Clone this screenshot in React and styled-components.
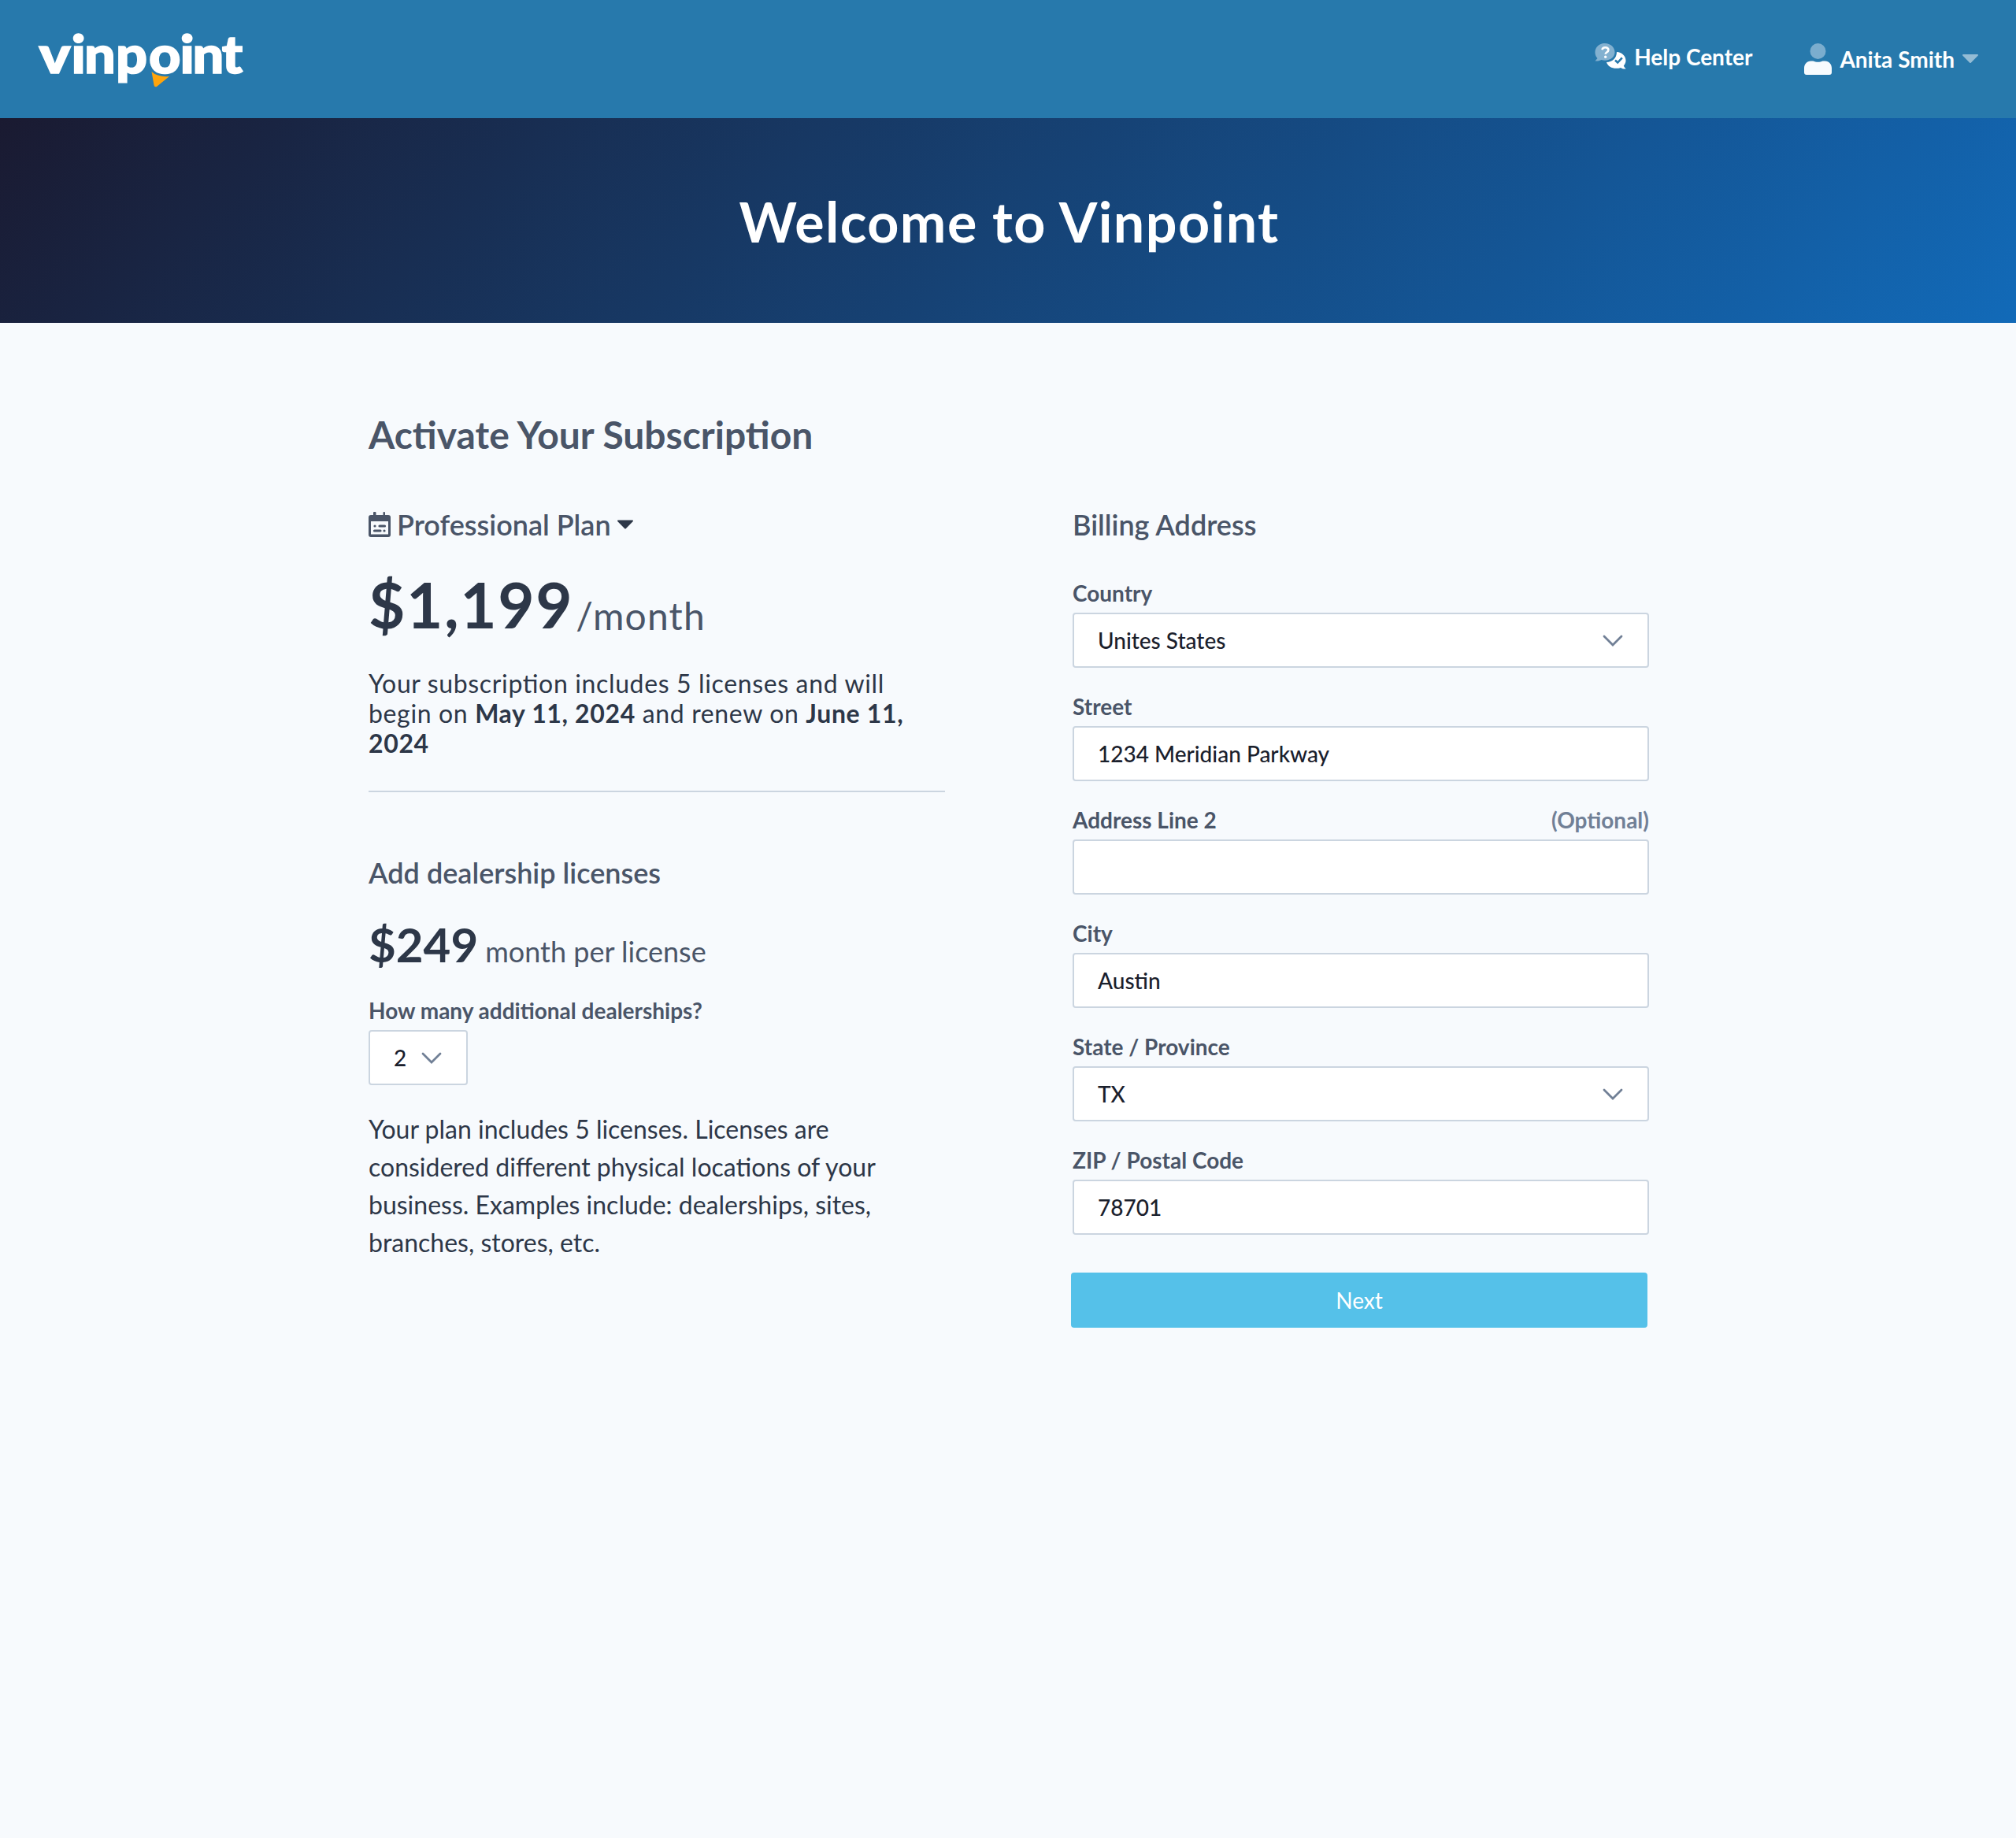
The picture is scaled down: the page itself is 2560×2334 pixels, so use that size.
import React from "react";
import styled, { createGlobalStyle } from "styled-components";

const GlobalStyle = createGlobalStyle`
  * { box-sizing: border-box; }
  body {
    margin: 0;
    background: #f7fafd;
    font-family: Lato, "Liberation Sans", sans-serif;
    color: #2d3748;
    font-feature-settings: "liga" 1;
  }
  h1, h2, h3, p { margin: 0; }
`;

const Page = styled.div`
  min-height: 2334px;
  background: #f7fafd;
`;

const Header = styled.header`
  height: 150px;
  padding: 0 48px 0 40px;
  background: #2779ac;
  display: flex;
  align-items: center;
  justify-content: space-between;
`;

const LogoSvg = styled.svg`
  display: block;
  width: 290px;
  height: 130px;
  text {
    font-family: Lato, sans-serif;
    font-weight: 900;
    font-size: 65px;
    fill: #fff;
    stroke: #fff;
    stroke-width: 1.6px;
  }
`;

const Nav = styled.nav`
  display: flex;
  align-items: center;
`;

const NavItem = styled.a`
  display: flex;
  align-items: center;
  gap: ${(p) => p.$gap}px;
  margin-left: ${(p) => p.$left || 0}px;
  padding-bottom: ${(p) => p.$lift || 0}px;
  color: #fff;
  font-size: 28px;
  font-weight: 700;
  line-height: 40px;
`;

const Hero = styled.section`
  height: 260px;
  display: flex;
  align-items: center;
  justify-content: center;
  padding: 1px 0 0 3px;
  background: linear-gradient(135deg, #1a1a31 0%, #126ab8 100%);
`;

const HeroTitle = styled.h1`
  color: #fff;
  font-size: 70px;
  font-weight: 700;
  line-height: 90px;
  letter-spacing: 0.02em;
`;

const Main = styled.main`
  width: 1628px;
  margin: 0 auto;
  padding: 106px 0 0 2px;
`;

const PageTitle = styled.h2`
  color: #4a5568;
  font-size: 48px;
  font-weight: 700;
  line-height: 72px;
`;

const Columns = styled.div`
  display: grid;
  grid-template-columns: 732px 732px;
  justify-content: space-between;
  padding-top: 48px;
`;

const Column = styled.section`
  display: flex;
  flex-direction: column;
`;

const SectionTitle = styled.h3`
  display: flex;
  align-items: center;
  color: #4a5568;
  font-size: 36px;
  font-weight: 600;
  line-height: 60px;
`;

const PlanName = styled.span`
  margin: 0 8px;
`;

const PriceRow = styled.div`
  display: flex;
  align-items: baseline;
  margin-top: ${(p) => p.$top}px;
  gap: ${(p) => p.$gap}px;
  height: ${(p) => p.$height}px;
  line-height: ${(p) => p.$height}px;
`;

const Amount = styled.span`
  font-size: ${(p) => p.$size}px;
  font-weight: 700;
  letter-spacing: ${(p) => p.$spacing || 0}px;
`;

const Period = styled.span`
  color: #4a5568;
  font-size: ${(p) => p.$size}px;
  letter-spacing: ${(p) => p.$spacing || 0}px;
  transform: translateY(${(p) => p.$drop || 0}px);
`;

const Summary = styled.p`
  margin-top: 34px;
  font-size: 32px;
  line-height: 38px;
  letter-spacing: 0.02em;
`;

const Divider = styled.hr`
  width: 100%;
  height: 2px;
  margin: 41px 0 72px;
  border: 0;
  background: #cbd5e0;
`;

const Note = styled.p`
  margin-top: 32px;
  font-size: 32px;
  line-height: 48px;
`;

const Field = styled.div`
  margin-top: ${(p) => p.$top}px;
`;

const LabelRow = styled.div`
  display: flex;
  justify-content: space-between;
  height: 48px;
  color: #4a5568;
  font-size: 28px;
  font-weight: 700;
  line-height: 46px;
`;

const Optional = styled.span`
  color: #718096;
`;

const Control = styled.div`
  display: flex;
  align-items: center;
  justify-content: space-between;
  width: ${(p) => p.$width || "100%"};
  height: 70px;
  padding: 0 31px 0 30px;
  border: 2px solid #cbd5e0;
  border-radius: 4px;
  background: #fff;
  color: #1a202c;
  font-size: 28px;
  font-weight: 500;
  line-height: 40px;
`;

const NextButton = styled.button`
  width: 732px;
  height: 70px;
  margin: 48px 0 0 -2px;
  padding: 0;
  border: 0;
  border-radius: 4px;
  background: #55c1e9;
  color: #fff;
  font-family: inherit;
  font-size: 28px;
  line-height: 40px;
`;

const Icon = styled.svg`
  display: block;
  flex: none;
  margin-top: ${(p) => p.$top || 0}px;
`;

function Logo() {
  return (
    <LogoSvg viewBox="40 10 290 130">
      <text transform="translate(49.5 93) scale(1.16 1.03)">v</text>
      <text transform="translate(0 93) scale(1.08 1.03)" x="83.8 99.1 136.2 175 211.6 226.4 261">inpoint</text>
      <path d="M192.500 91 Q200 98 215 97 L199 110 Q196 111 195.500 108 Z" fill="#ffa40b" />
    </LogoSvg>
  );
}

function HelpIcon() {
  return (
    <Icon width="41" height="34" viewBox="0 0 41 34">
      <path d="M13 0C6 0 0.500 5 0.500 11.500c0 3 1.200 5.500 3 7.500L0.500 22.500c4 .3 6.500-.6 8-1.500 9 2.500 17-2.500 17-9.500C25.500 5 20 0 13 0Z" fill="#83b1d0" />
      <path d="M28 11c6.500.5 11.500 5 11.500 10.800 0 2.600-1 4.800-2.700 6.600 1 2.200 2 3.200 3.200 3.900-2.600.5-5-.2-6.800-1.400C25 33.500 17 30.500 15 24c7 0 13-5 13-13Z" fill="#fff" />
      <path d="M26 21.500l3.200 3 5.600-6.200" fill="none" stroke="#2779ac" strokeWidth="2.600" />
      <path d="M9.500 8.200c.3-2 1.800-3 3.900-3 2.300 0 4 1.200 4 3.200 0 2.800-3.700 2.800-3.700 5.400" fill="none" stroke="#fff" strokeWidth="2.600" />
      <circle cx="13.700" cy="17.300" r="1.700" fill="#fff" />
    </Icon>
  );
}

function UserIcon() {
  return (
    <Icon width="35" height="40" viewBox="0.500 0 35 40">
      <circle cx="18" cy="10" r="10" fill="#7badce" />
      <path d="M9 22.500h3c3.500 1.800 8.500 1.800 12 0h3c5 0 8.500 4 8.500 9V37c0 1.800-1.200 3-3 3h-29c-1.800 0-3-1.200-3-3v-5.500c0-5 3.500-9 8.500-9Z" fill="#f7fbfe" />
    </Icon>
  );
}

function CalendarIcon() {
  return (
    <Icon width="28" height="32" viewBox="0 0 28 32">
      <path fillRule="evenodd" fill="#4a5568" d="M6 1q0-1 1-1h1.500q1 0 1 1v3h9V1q0-1 1-1H20q1 0 1 1v3h4q3 0 3 3v22q0 3-3 3H3q-3 0-3-3V7q0-3 3-3h3ZM3 12v16.500h22V12Z" />
      <path d="M8 18h.01M14 18h6.500M7.500 24h7.500M20 24h.01" stroke="#4a5568" strokeWidth="3.200" strokeLinecap="round" />
    </Icon>
  );
}

function Caret({ width, height, color }) {
  return (
    <Icon width={width} height={height} viewBox="0 0 20 11">
      <path d="M1 0h18q1.600.4.600 1.800L11 10.400q-1 1-2 0L.4 1.800Q-.6.400 1 0Z" fill={color} />
    </Icon>
  );
}

function Chevron() {
  return (
    <Icon $top={2} width="26" height="16" viewBox="0 0 26 16">
      <path d="M2 2l11 11L24 2" fill="none" stroke="#718096" strokeWidth="2.800" strokeLinecap="round" />
    </Icon>
  );
}

const fields = [
  { label: "Country", value: "Unites States", select: true },
  { label: "Street", value: "1234 Meridian Parkway" },
  { label: "Address Line 2", value: "", optional: true },
  { label: "City", value: "Austin" },
  { label: "State / Province", value: "TX", select: true },
  { label: "ZIP / Postal Code", value: "78701" },
];

export default function App() {
  return (
    <Page>
      <GlobalStyle />
      <Header>
        <Logo />
        <Nav>
          <NavItem $gap={9} $lift={7}>
            <HelpIcon />
            Help Center
          </NavItem>
          <NavItem $gap={10} $left={66} $lift={1}>
            <UserIcon />
            Anita Smith
            <Caret width={20} height={11} color="#93bcd5" />
          </NavItem>
        </Nav>
      </Header>
      <Hero>
        <HeroTitle>Welcome to Vinpoint</HeroTitle>
      </Hero>
      <Main>
        <PageTitle>Activate Your Subscription</PageTitle>
        <Columns>
          <Column>
            <SectionTitle>
              <CalendarIcon />
              <PlanName>Professional Plan</PlanName>
              <Caret width={20} height={12} color="#2d3748" />
            </SectionTitle>
            <PriceRow $top={23} $gap={3} $height={96}>
              <Amount $size={80} $spacing={1.600}>$1,199</Amount>
              <Period $size={48} $spacing={1.200} $drop={2}>/month</Period>
            </PriceRow>
            <Summary>
              Your subscription includes 5 licenses and will begin on{" "}
              <b>May 11, 2024</b> and renew on <b>June 11, 2024</b>
            </Summary>
            <Divider />
            <SectionTitle>Add dealership licenses</SectionTitle>
            <PriceRow $top={25} $gap={9} $height={72}>
              <Amount $size={60}>$249</Amount>
              <Period $size={36}>month per license</Period>
            </PriceRow>
            <Field $top={25}>
              <LabelRow>How many additional dealerships?</LabelRow>
              <Control $width="126px">
                2
                <Chevron />
              </Control>
            </Field>
            <Note>
              Your plan includes 5 licenses. Licenses are considered different
              physical locations of your business. Examples include:
              dealerships, sites, branches, stores, etc.
            </Note>
          </Column>
          <Column>
            <SectionTitle>Billing Address</SectionTitle>
            {fields.map((f, i) => (
              <Field key={f.label} $top={i === 0 ? 34 : 26}>
                <LabelRow>
                  {f.label}
                  {f.optional && <Optional>(Optional)</Optional>}
                </LabelRow>
                <Control>
                  {f.value}
                  {f.select && <Chevron />}
                </Control>
              </Field>
            ))}
            <NextButton>Next</NextButton>
          </Column>
        </Columns>
      </Main>
    </Page>
  );
}
